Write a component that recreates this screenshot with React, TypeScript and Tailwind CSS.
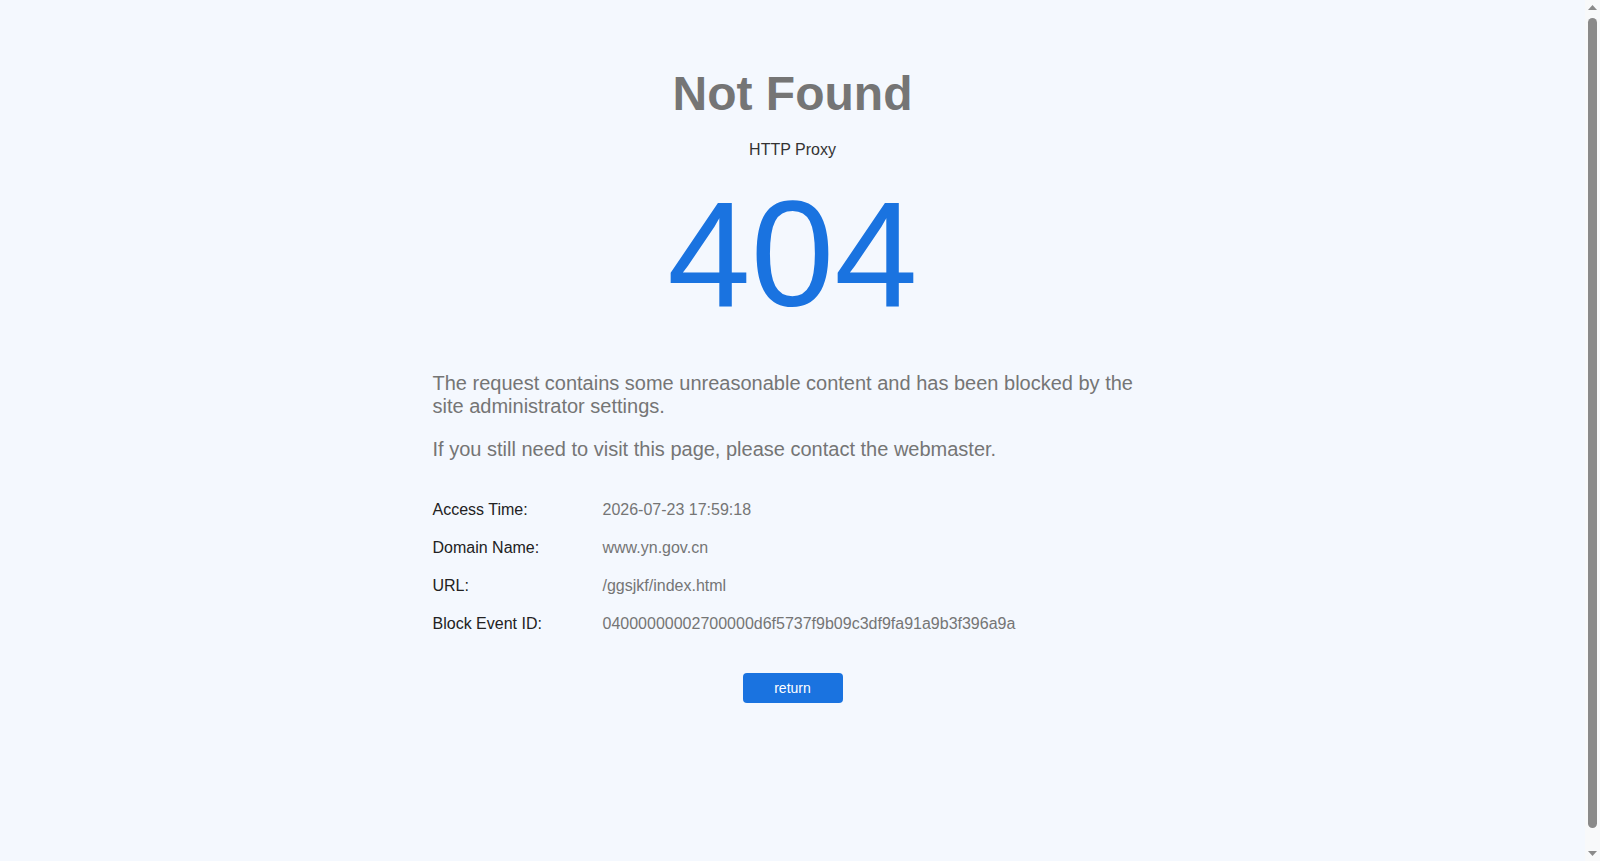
import React from "react";

function FakeScrollbar() {
  return (
    <div className="fixed right-0 top-0 h-[861px] w-[15px] bg-[#f8f9fa]">
      <svg className="absolute left-0 top-[4px]" width="15" height="6" viewBox="0 0 15 6">
        <polygon points="3,6 12,6 7.5,1" fill="#8a8a8a" />
      </svg>
      <div className="absolute left-[3px] top-[18px] h-[810px] w-[9px] rounded-full bg-[#8a8a8a]" />
      <svg className="absolute bottom-[4px] left-0" width="15" height="6" viewBox="0 0 15 6">
        <polygon points="3,0 12,0 7.5,5" fill="#8a8a8a" />
      </svg>
    </div>
  );
}

export default function App() {
  const rows: [string, string][] = [
    ["Access Time:", "2026-07-23 17:59:18"],
    ["Domain Name:", "www.yn.gov.cn"],
    ["URL:", "/ggsjkf/index.html"],
    ["Block Event ID:", "04000000002700000d6f5737f9b09c3df9fa91a9b3f396a9a"],
  ];
  return (
    <div className="min-h-[883px] bg-[#f4f8fe] pr-[15px] font-['Liberation_Sans',Arial,sans-serif]">
      <div className="mx-auto w-[720px] pt-[66px]">
        <h1 className="text-center text-[48px] font-bold leading-[55px] text-[#757575]">Not Found</h1>
        <p className="mt-[20px] text-center text-[16px] leading-[18px] text-[#333333]">HTTP Proxy</p>
        <div className="mt-[9px] text-center text-[150px] leading-[172px] text-[#1a73e0]">404</div>
        <div className="mt-[32px] text-[20px] leading-[23px] text-[#757575]">
          <p>The request contains some unreasonable content and has been blocked by the site administrator settings.</p>
          <p className="mt-[20px]">If you still need to visit this page, please contact the webmaster.</p>
        </div>
        <div className="mt-[30px] text-[16px]">
          {rows.map(([k, v]) => (
            <div key={k} className="flex h-[38px] items-center">
              <div className="w-[170px] text-[#222222]">{k}</div>
              <div className="text-[#757575]">{v}</div>
            </div>
          ))}
        </div>
        <div className="mt-[30px] flex justify-center">
          <button className="h-[30px] w-[100px] rounded-[4px] bg-[#1a73e0] text-[14px] text-white">return</button>
        </div>
      </div>
      <FakeScrollbar />
    </div>
  );
}
